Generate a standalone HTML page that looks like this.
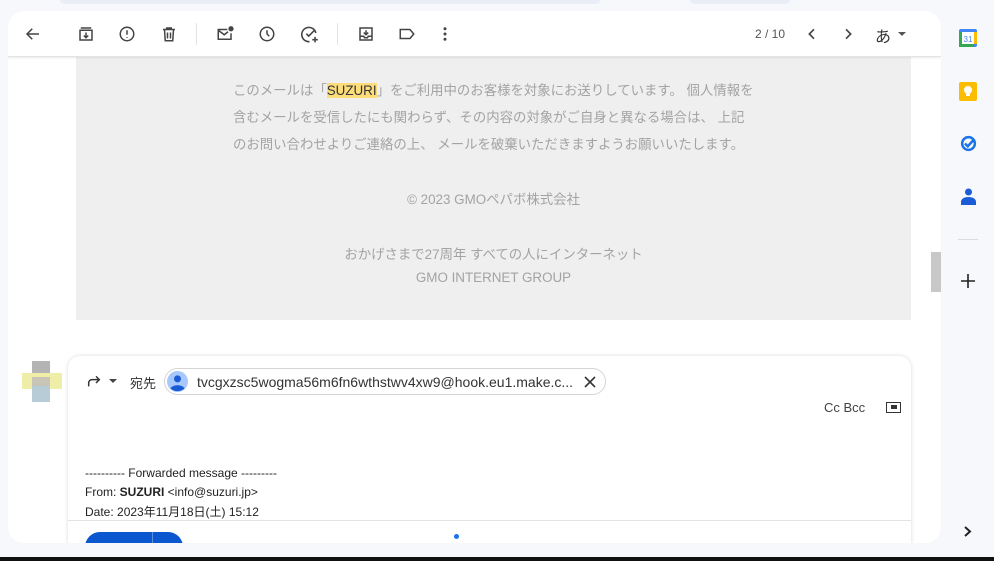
<!DOCTYPE html>
<html><head><meta charset="utf-8">
<style>
*{margin:0;padding:0;box-sizing:border-box}
body{width:994px;height:561px;overflow:hidden;background:#f6f8fc;position:relative;font-family:"Liberation Sans","Noto Sans CJK JP",sans-serif;color:#202124}
.abs{position:absolute}
.card{left:8px;top:11px;width:933px;height:532px;background:#fff;border-radius:16px;overflow:hidden}
.toolbar{left:0;top:0;width:933px;height:46px;border-bottom:1px solid #e3e3e3;box-shadow:0 1px 2px rgba(0,0,0,.08);background:#fff;z-index:2}
.ic{position:absolute;top:14px}
.gray{left:68px;top:46px;width:835px;height:263px;background:#efefef}
.t{position:absolute;white-space:nowrap;font-size:13.4px;color:#a3a3a3;font-family:"Liberation Sans","Noto Sans CJK JP",sans-serif}
.hl{background:#fddc7a;color:#333}
.compose{left:60px;top:345px;width:843px;height:200px;background:#fff;border-radius:12px 12px 0 0;box-shadow:0 0 4px rgba(0,0,0,.15)}
.chip{position:absolute;left:96px;top:12px;width:442px;height:27px;border:1px solid #d5d5d5;border-radius:14px}
.fw{position:absolute;left:17px;font-size:12px;color:#222;white-space:nowrap}
</style></head><body>
<div class="abs" style="left:60px;top:0;width:540px;height:4px;background:#e9eef6;border-radius:0 0 8px 8px"></div>
<div class="abs" style="left:690px;top:0;width:100px;height:4px;background:#e9eef6;border-radius:0 0 8px 8px"></div>
<div class="abs card">
 <div class="abs toolbar">
  <svg class="ic" style="left:16px" width="18" height="18" viewBox="0 0 24 24" fill="none" stroke="#444" stroke-width="2"><path d="M20 12H5M11 5l-7 7 7 7"/></svg>
  <svg class="ic" style="left:69px" width="18" height="18" viewBox="0 0 24 24" fill="none" stroke="#444" stroke-width="2"><rect x="4" y="7" width="16" height="13"/><path d="M5 4h14M12 10v7M9 14l3 3 3-3"/></svg>
  <svg class="ic" style="left:110px" width="18" height="18" viewBox="0 0 24 24" fill="none" stroke="#444" stroke-width="2"><circle cx="12" cy="12" r="9"/><path d="M12 7v6M12 16v1"/></svg>
  <svg class="ic" style="left:152px" width="18" height="18" viewBox="0 0 24 24" fill="none" stroke="#444" stroke-width="2"><path d="M4 6h16M9 6V4h6v2M6 6l1 15h10l1-15M10 10v8M14 10v8"/></svg>
  <div class="abs" style="left:188px;top:12px;width:1px;height:22px;background:#e3e3e3"></div>
  <svg class="ic" style="left:208px" width="18" height="18" viewBox="0 0 24 24" fill="none" stroke="#444" stroke-width="2"><path d="M15 6H3v13h17v-8"/><path d="M3 7l8 6 5-4"/><circle cx="20" cy="5" r="2.5" fill="#444"/></svg>
  <svg class="ic" style="left:250px" width="18" height="18" viewBox="0 0 24 24" fill="none" stroke="#444" stroke-width="2"><circle cx="12" cy="12" r="9"/><path d="M12 7v5l3 3"/></svg>
  <svg class="ic" style="left:292px" width="19" height="19" viewBox="0 0 24 24" fill="none" stroke="#444" stroke-width="2"><path d="M20 10a9 9 0 1 0-8 11"/><path d="M8 11l3 3 8-8M19 15v7M15.5 18.5h7"/></svg>
  <div class="abs" style="left:329px;top:12px;width:1px;height:22px;background:#e3e3e3"></div>
  <svg class="ic" style="left:349px" width="18" height="18" viewBox="0 0 24 24" fill="none" stroke="#444" stroke-width="2"><rect x="4" y="4" width="16" height="16"/><path d="M4 15h5l1 2h4l1-2h5M12 7v6M9 10l3 3 3-3"/></svg>
  <svg class="ic" style="left:390px" width="18" height="18" viewBox="0 0 24 24" fill="none" stroke="#444" stroke-width="2"><path d="M3 6h13l5 6-5 6H3z"/></svg>
  <svg class="ic" style="left:428px" width="18" height="18" viewBox="0 0 24 24" fill="#444"><circle cx="12" cy="5" r="2"/><circle cx="12" cy="12" r="2"/><circle cx="12" cy="19" r="2"/></svg>
  <div class="abs" style="left:747px;top:16px;font-size:12px;color:#555">2 / 10</div>
  <svg class="ic" style="left:796px" width="16" height="18" viewBox="0 0 24 24" fill="none" stroke="#444" stroke-width="2.5"><path d="M15 5l-7 7 7 7"/></svg>
  <svg class="ic" style="left:832px" width="16" height="18" viewBox="0 0 24 24" fill="none" stroke="#444" stroke-width="2.5"><path d="M9 5l7 7-7 7"/></svg>
  <div class="abs" style="left:867px;top:12px;font-size:16px;color:#333">あ</div>
  <div class="abs" style="left:890px;top:21px;width:0;height:0;border-left:4px solid transparent;border-right:4px solid transparent;border-top:4px solid #555"></div>
 </div>
 <div class="abs gray">
  <div class="t" style="left:157px;top:22px">このメールは「<span class="hl">SUZURI</span>」をご利用中のお客様を対象にお送りしています。 個人情報を</div>
  <div class="t" style="left:157px;top:49px">含むメールを受信したにも関わらず、その内容の対象がご自身と異なる場合は、 上記</div>
  <div class="t" style="left:157px;top:76px">のお問い合わせよりご連絡の上、 メールを破棄いただきますようお願いいたします。</div>
  <div class="t" style="left:0;width:835px;text-align:center;top:131px">© 2023 GMOペパボ株式会社</div>
  <div class="t" style="left:0;width:835px;text-align:center;top:186px">おかげさまで27周年 すべての人にインターネット</div>
  <div class="t" style="left:0;width:835px;text-align:center;top:213px;font-size:13.4px">GMO INTERNET GROUP</div>
 </div>
 <div class="abs" style="left:923px;top:241px;width:11px;height:40px;background:#c8c8c8"></div>
 <div class="abs" style="left:24px;top:350px;width:18px;height:12px;background:#b4b4b4"></div>
 <div class="abs" style="left:14px;top:362px;width:40px;height:16px;background:#eeeea8"></div>
 <div class="abs" style="left:24px;top:366px;width:18px;height:10px;background:#c8c4b6"></div>
 <div class="abs" style="left:24px;top:375px;width:18px;height:16px;background:#b8ccd8"></div>
 <div class="abs compose">
  <svg class="abs" style="left:18px;top:17px" width="16" height="16" viewBox="0 0 24 24" fill="none" stroke="#333" stroke-width="2.2"><path d="M4 20v-5a5 5 0 0 1 5-5h11M15 5l5 5-5 5"/></svg>
  <div class="abs" style="left:41px;top:23px;border-left:4px solid transparent;border-right:4px solid transparent;border-top:4px solid #444"></div>
  <div class="abs" style="left:62px;top:17px;font-size:13px;color:#333">宛先</div>
  <div class="chip">
   <svg class="abs" style="left:2px;top:2px" width="21" height="21" viewBox="0 0 24 24"><circle cx="12" cy="12" r="12" fill="#a8c7fa"/><circle cx="12" cy="9" r="4" fill="#1a5bd6"/><path d="M4 20c2-5 14-5 16 0a12 12 0 0 1-16 0z" fill="#1a5bd6"/></svg>
   <div class="abs" style="left:32px;top:5px;font-size:14px;color:#333;white-space:nowrap">tvcgxzsc5wogma56m6fn6wthstwv4xw9@hook.eu1.make.c...</div>
   <svg class="abs" style="left:419px;top:7px" width="12" height="12" viewBox="0 0 12 12" stroke="#333" stroke-width="1.6"><path d="M1 1l10 10M11 1L1 11"/></svg>
  </div>
  <div class="abs" style="left:756px;top:44px;font-size:13px;color:#444">Cc Bcc</div>
  <div class="abs" style="left:818px;top:46px;width:15px;height:11px;border:1.5px solid #333"><div style="position:absolute;left:4px;top:2px;width:6px;height:4px;background:#333"></div></div>
  <div class="fw" style="top:110px">---------- Forwarded message ---------</div>
  <div class="fw" style="top:129px">From: <b>SUZURI</b> &lt;info@suzuri.jp&gt;</div>
  <div class="fw" style="top:147px">Date: 2023年11月18日(土) 15:12</div>
  <div class="abs" style="left:0;top:164px;width:843px;height:1px;background:#e3e3e3"></div>
  <div class="abs" style="left:17px;top:176px;width:98px;height:30px;background:#0b57d0;border-radius:15px"></div>
  <div class="abs" style="left:84px;top:176px;width:1px;height:12px;background:#5d8ee0"></div>
  <div class="abs" style="left:386px;top:178px;width:5px;height:5px;border-radius:50%;background:#1a73e8"></div>
 </div>
</div>
<svg class="abs" style="left:959px;top:29px" width="18" height="18" viewBox="0 0 18 18"><rect x="0" y="0" width="18" height="18" rx="2" fill="#4285f4"/><rect x="3" y="3" width="12" height="12" fill="#fff"/><rect x="0" y="15" width="15" height="3" fill="#34a853"/><rect x="0" y="3" width="3" height="12" fill="#34a853"/><rect x="15" y="3" width="3" height="12" fill="#fbbc04"/><text x="9" y="13" font-size="8" text-anchor="middle" fill="#4285f4" font-family="Liberation Sans">31</text></svg>
<svg class="abs" style="left:959px;top:82px" width="18" height="19" viewBox="0 0 18 19"><rect width="18" height="19" rx="2" fill="#fbbc04"/><circle cx="9" cy="8" r="4" fill="#fff"/><rect x="7" y="12" width="4" height="2" fill="#fff"/></svg>
<svg class="abs" style="left:960px;top:135px" width="17" height="17" viewBox="0 0 24 24" fill="none" stroke="#1a73e8" stroke-width="3.5"><circle cx="12" cy="12" r="9"/><path d="M7 12l4 4 9-10"/></svg>
<svg class="abs" style="left:961px;top:188px" width="15" height="17" viewBox="0 0 15 17" fill="#1a5bd6"><circle cx="7.5" cy="4" r="3.5"/><path d="M0 17v-3c0-3 3-5 7.5-5s7.5 2 7.5 5v3z"/></svg>
<div class="abs" style="left:958px;top:239px;width:20px;height:1px;background:#dadce0"></div>
<svg class="abs" style="left:961px;top:274px" width="14" height="14" viewBox="0 0 14 14" stroke="#222" stroke-width="1.6"><path d="M7 0v14M0 7h14"/></svg>
<svg class="abs" style="left:964px;top:526px" width="8" height="11" viewBox="0 0 8 11" fill="none" stroke="#222" stroke-width="2"><path d="M1 1l5 4.5L1 10"/></svg>
<div class="abs" style="left:0;top:557px;width:994px;height:4px;background:#111"></div>
</body></html>
